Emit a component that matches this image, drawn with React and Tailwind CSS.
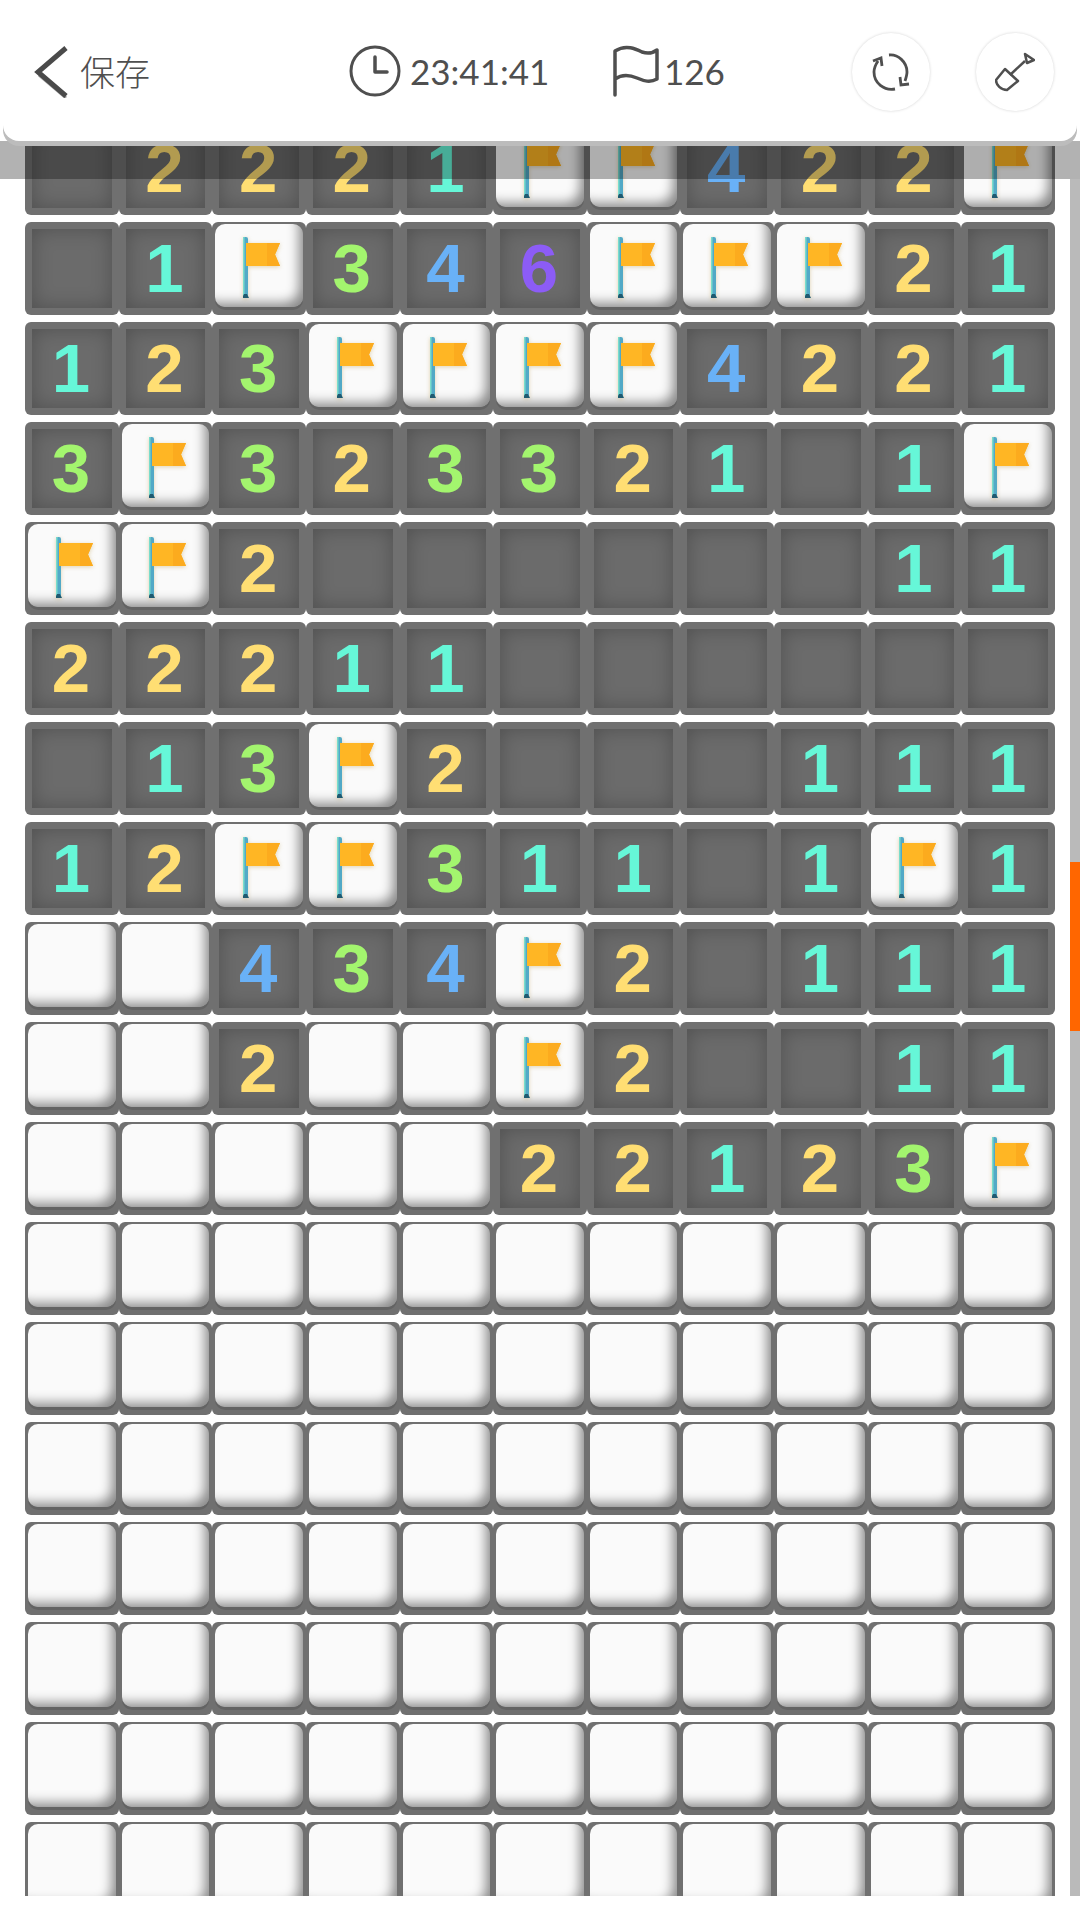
import React from 'react';

const BOARD = [
  '_2221FF422F',
  '_1F346FFF21',
  '123FFFF4221',
  '3F323321_1F',
  'FF2______11',
  '22211______',
  '_13F2___111',
  '12FF311_1F1',
  'CC434F2_111',
  'CC2CCF2__11',
  'CCCCC22123F',
  'CCCCCCCCCCC',
  'CCCCCCCCCCC',
  'CCCCCCCCCCC',
  'CCCCCCCCCCC',
  'CCCCCCCCCCC',
  'CCCCCCCCCCC',
  'CCCCCCCCCCC',
];

const NUM_COLORS = {
  1: 'text-[#66f7d8]',
  2: 'text-[#ffde73]',
  3: 'text-[#a3f56e]',
  4: 'text-[#69b1f7]',
  6: 'text-[#8c5cf6]',
};

const Flag = () => (
  <svg width="38" height="62" viewBox="0 0 38 62" className="ml-[6px] mt-[5px] drop-shadow-[0_1px_2px_rgba(180,140,40,0.35)]">
    <rect x="0" y="0" width="5" height="60" rx="2" fill="#52a9c6" />
    <rect x="0" y="0" width="1.5" height="60" fill="#7adccb" />
    <path d="M-1 61 L1 57 H4 L6 61 Z" fill="#1f5a70" />
    <path d="M3 6 H37 L32 17.5 L37 29 H3 Z" fill="#ffb624" />
    <path d="M24 6 H37 L32 17.5 L37 29 H24 Z" fill="#fcab1e" />
  </svg>
);

const Cell = ({ value }) => {
  if (value === 'C' || value === 'F') {
    return (
      <div className="h-[93px] rounded-[6px] bg-[#707070] pt-[2px] pb-[8px] px-[3px]">
        <div className="h-full rounded-[10px] bg-[#fafafa] shadow-[inset_-9px_-9px_12px_-5px_rgba(0,0,0,0.45),0_3px_0_#636363] flex items-center justify-center">
          {value === 'F' && <Flag />}
        </div>
      </div>
    );
  }
  return (
    <div className="h-[93px] rounded-[6px] bg-[#707070] pt-[7px] pb-[7px] px-[7px]">
      <div className="h-full bg-[#6b6b6b] shadow-[inset_0_0_20px_rgba(0,0,0,0.26)] flex items-center justify-center pr-[2px]">
        {value !== '_' && (
          <span className={`font-['Liberation_Sans',sans-serif] font-bold text-[69px] leading-none ${NUM_COLORS[value]}`}>
            {value}
          </span>
        )}
      </div>
    </div>
  );
};

const RoundButton = ({ children }) => (
  <div className="w-[78px] h-[78px] rounded-full bg-white shadow-[0_0_3px_rgba(0,0,0,0.18)] flex items-center justify-center">
    {children}
  </div>
);

export default function App() {
  return (
    <div className="relative w-[1080px] h-[1920px] bg-white overflow-hidden">
      {/* top bar */}
      <header className="relative z-20 mx-[3px] h-[141px] pt-[3px] rounded-b-[16px] bg-white shadow-[0_5px_0_#bcbcbc] flex items-center text-[#4f4f4f]">
        <svg width="36" height="52" viewBox="0 0 36 52" className="ml-[29px]">
          <path d="M7 29 L34 52" fill="none" stroke="#aaa" strokeWidth="3" />
          <path d="M34 2 L6 26 L34 50" fill="none" stroke="#4a4a4a" strokeWidth="5" />
        </svg>
        <span className="ml-[12px] mb-[2px] w-[73px] font-['Noto_Sans_CJK_SC',sans-serif] font-light text-[35px]">保存</span>
        <svg width="52" height="52" viewBox="0 0 52 52" className="ml-[196px] -mt-[2px]" fill="none" stroke="#4f4f4f">
          <circle cx="26" cy="26" r="24" strokeWidth="3" />
          <path d="M26 12 V27 H38" strokeWidth="3.5" strokeLinecap="round" strokeLinejoin="round" />
        </svg>
        <span className="ml-[9px] mb-[2px] w-[140px] font-['Lato',sans-serif] text-[35px]">23:41:41</span>
        <svg width="48" height="52" viewBox="0 0 48 52" className="ml-[62px] -mt-[2px]" fill="none" stroke="#4f4f4f" strokeWidth="3.5">
          <path d="M3 50 V6 C14 -1 24 4 30 7 C36 9 41 8 45 5 V34 C38 38 32 36 25 33 C18 30 10 29 3 34" strokeLinecap="round" strokeLinejoin="round" />
        </svg>
        <span className="ml-[4px] mb-[2px] font-['Lato',sans-serif] text-[35px]">126</span>
        <div className="ml-auto mr-[23px] flex gap-[46px]">
          <RoundButton>
            <svg width="40" height="40" viewBox="0 0 40 40" fill="none" stroke="#4f4f4f" strokeWidth="2.8">
              <path d="M18 3 C27 2 36 10 36 20 C36 23 35 26 34 29" />
              <path d="M24 37 C13 39 3 31 3 20 C3 16 5 12 7 9" />
              <path d="M2 9 L10 6 L11 14" />
              <path d="M38 32 L30 33 L29 25" />
            </svg>
          </RoundButton>
          <RoundButton>
            <svg width="40" height="40" viewBox="0 0 40 40" fill="none" stroke="#4f4f4f" strokeWidth="2.5" strokeLinejoin="round">
              <path d="M10 17 L23 29 L12 38 C6 38 1 33 1 28 Z" />
              <path d="M15 23 L30 9" />
              <path d="M30 2 L39 8 L32 11 Z" />
            </svg>
          </RoundButton>
        </div>
      </header>

      {/* board, scrolled so the first row is partly under the bar */}
      <div className="h-[1755px] overflow-hidden">
        <div className="-mt-[19px] px-[25px] w-[1055px] box-content flex flex-col gap-[7px]">
          {BOARD.map((row, r) => (
            <div key={r} className="grid grid-cols-11 w-[1030px]">
              {row.split('').map((value, c) => (
                <Cell key={c} value={value} />
              ))}
            </div>
          ))}
        </div>
      </div>

      {/* translucent band under the bar */}
      <div className="absolute z-10 left-0 right-0 top-[141px] h-[38px] bg-black/30" />

      {/* scrollbar */}
      <div className="absolute z-10 right-0 top-[179px] w-[10px] h-[1717px] bg-[#bababa]">
        <div className="absolute top-[683px] w-full h-[169px] bg-[#ff6600]" />
      </div>
    </div>
  );
}
